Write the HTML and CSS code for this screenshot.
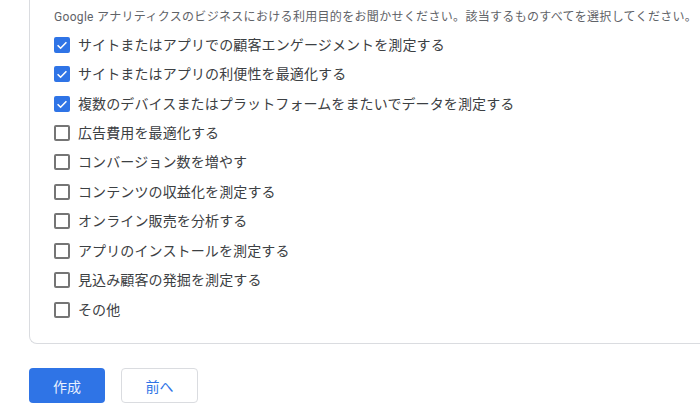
FILE: index.html
```html
<!DOCTYPE html>
<html lang="ja">
<head>
<meta charset="utf-8">
<title>ビジネスの目的</title>
<link rel="stylesheet" href="styles.css">
</head>
<body>
<div class="card">
  <p class="lead">Google アナリティクスのビジネスにおける利用目的をお聞かせください。該当するものすべてを選択してください。</p>
  <ul class="options">
    <li class="option"><span class="box checked"><svg viewBox="0 0 16 16" width="16" height="16"><path d="M3.6 8.2l3 3 5.8-6" fill="none" stroke="#fff" stroke-width="1.6"/></svg></span><span class="label">サイトまたはアプリでの顧客エンゲージメントを測定する</span></li>
    <li class="option"><span class="box checked"><svg viewBox="0 0 16 16" width="16" height="16"><path d="M3.6 8.2l3 3 5.8-6" fill="none" stroke="#fff" stroke-width="1.6"/></svg></span><span class="label">サイトまたはアプリの利便性を最適化する</span></li>
    <li class="option"><span class="box checked"><svg viewBox="0 0 16 16" width="16" height="16"><path d="M3.6 8.2l3 3 5.8-6" fill="none" stroke="#fff" stroke-width="1.6"/></svg></span><span class="label">複数のデバイスまたはプラットフォームをまたいでデータを測定する</span></li>
    <li class="option"><span class="box"></span><span class="label">広告費用を最適化する</span></li>
    <li class="option"><span class="box"></span><span class="label">コンバージョン数を増やす</span></li>
    <li class="option"><span class="box"></span><span class="label">コンテンツの収益化を測定する</span></li>
    <li class="option"><span class="box"></span><span class="label">オンライン販売を分析する</span></li>
    <li class="option"><span class="box"></span><span class="label">アプリのインストールを測定する</span></li>
    <li class="option"><span class="box"></span><span class="label">見込み顧客の発掘を測定する</span></li>
    <li class="option"><span class="box"></span><span class="label">その他</span></li>
  </ul>
</div>
<div class="actions">
  <button class="btn primary">作成</button>
  <button class="btn secondary">前へ</button>
</div>
</body>
</html>
```

FILE: styles.css
```css
html, body {
  margin: 0;
  padding: 0;
  background: #fff;
  overflow: hidden;
}
body {
  width: 700px;
  height: 415px;
  font-family: Roboto, "Noto Sans CJK JP", sans-serif;
  color: #3c4043;
}
.card {
  margin-left: 29px;
  width: 700px;
  border: 1px solid #dadce0;
  border-top: none;
  border-right: none;
  border-radius: 0 0 0 8px;
  padding: 9px 0 19px 24px;
  box-sizing: border-box;
}
.lead {
  margin: 0;
  font-size: 12px;
  line-height: 16px;
  letter-spacing: 0.32px;
  color: #5f6368;
  white-space: nowrap;
}
.options {
  list-style: none;
  margin: 5px 0 0 0;
  padding: 0;
}
.option {
  display: flex;
  align-items: center;
  height: 29.45px;
  gap: 8px;
}
.box {
  width: 16px;
  height: 16px;
  box-sizing: border-box;
  border: 2px solid #757575;
  border-radius: 2px;
  flex: none;
  display: flex;
  align-items: center;
  justify-content: center;
}
.box.checked {
  background: #2f74e6;
  border-color: #2f74e6;
}
.box svg {
  display: block;
  flex: none;
}
.label {
  font-size: 14px;
  line-height: 20px;
  letter-spacing: 0.12px;
  color: #3c4043;
  white-space: nowrap;
}
.actions {
  display: flex;
  gap: 16px;
  margin: 24px 0 0 29px;
}
.btn {
  width: 76px;
  height: 35px;
  border-radius: 4px;
  font-family: Roboto, "Noto Sans CJK JP", sans-serif;
  font-size: 14px;
  padding: 0;
  box-sizing: border-box;
}
.primary {
  background: #2f74e6;
  border: none;
  color: #e8f0fe;
}
.secondary {
  width: 77px;
  background: #fff;
  border: 1px solid #dadce0;
  color: #2f74e6;
}
```
